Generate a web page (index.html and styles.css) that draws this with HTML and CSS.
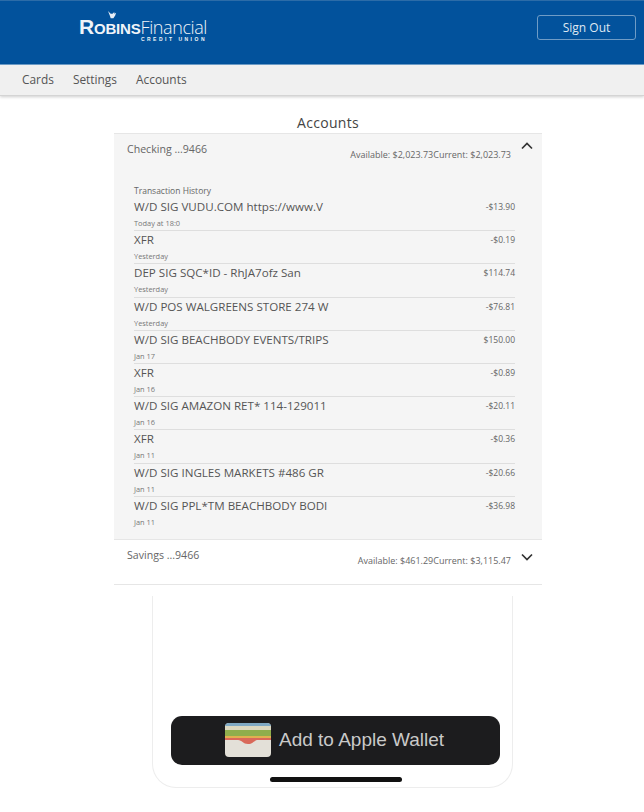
FILE: index.html
```html
<!DOCTYPE html>
<html lang="en">
<head>
    <meta charset="UTF-8">
    <meta name="viewport" content="width=device-width, initial-scale=1.0">
    <title>Accounts</title>
    <link rel="stylesheet" href="styles.css">
</head>
<body>

    <header class="topbar">
        <div class="logo">
            <svg class="logo-bird" viewBox="0 0 12 10" width="11" height="9" aria-hidden="true">
                <path d="M1 0 L4 3 L6 3 L8 1 L8 3 L10 2 L9 5 L7 8 L4 8 L3 5 Z" fill="#e8eef6"/>
            </svg>
            <div class="logo-main"><span class="logo-robins">Robins</span><span class="logo-fin">Financial</span></div>
            <div class="logo-sub">CREDIT UNION</div>
        </div>
        <button class="signout">Sign Out</button>
    </header>

    <nav class="navbar">
        <a>Cards</a>
        <a>Settings</a>
        <a>Accounts</a>
    </nav>

    <main class="content">
        <h1>Accounts</h1>

        <div class="accordion">
            <section class="account open">
                <div class="account-head">
                    <span class="account-name">Checking ...9466</span>
                    <span class="balances">Available: $2,023.73Current: $2,023.73</span>
                    <svg class="chevron" viewBox="0 0 12 8" width="12" height="8"><path d="M1 6.5 L6 1.5 L11 6.5" /></svg>
                </div>

                <div class="history">
                    <div class="history-label">Transaction History</div>
                    <div class="txn"><div class="txn-info"><div class="txn-title">W/D SIG VUDU.COM https://www.V</div><div class="txn-date">Today at 18:0</div></div><div class="txn-amount">-$13.90</div></div>
                    <div class="txn"><div class="txn-info"><div class="txn-title">XFR</div><div class="txn-date">Yesterday</div></div><div class="txn-amount">-$0.19</div></div>
                    <div class="txn"><div class="txn-info"><div class="txn-title">DEP SIG SQC*ID - RhJA7ofz San</div><div class="txn-date">Yesterday</div></div><div class="txn-amount">$114.74</div></div>
                    <div class="txn"><div class="txn-info"><div class="txn-title">W/D POS WALGREENS STORE 274 W</div><div class="txn-date">Yesterday</div></div><div class="txn-amount">-$76.81</div></div>
                    <div class="txn"><div class="txn-info"><div class="txn-title">W/D SIG BEACHBODY EVENTS/TRIPS</div><div class="txn-date">Jan 17</div></div><div class="txn-amount">$150.00</div></div>
                    <div class="txn"><div class="txn-info"><div class="txn-title">XFR</div><div class="txn-date">Jan 16</div></div><div class="txn-amount">-$0.89</div></div>
                    <div class="txn"><div class="txn-info"><div class="txn-title">W/D SIG AMAZON RET* 114-129011</div><div class="txn-date">Jan 16</div></div><div class="txn-amount">-$20.11</div></div>
                    <div class="txn"><div class="txn-info"><div class="txn-title">XFR</div><div class="txn-date">Jan 11</div></div><div class="txn-amount">-$0.36</div></div>
                    <div class="txn"><div class="txn-info"><div class="txn-title">W/D SIG INGLES MARKETS #486 GR</div><div class="txn-date">Jan 11</div></div><div class="txn-amount">-$20.66</div></div>
                    <div class="txn"><div class="txn-info"><div class="txn-title">W/D SIG PPL*TM BEACHBODY BODI</div><div class="txn-date">Jan 11</div></div><div class="txn-amount">-$36.98</div></div>
                </div>
            </section>

            <section class="account">
                <div class="account-head">
                    <span class="account-name">Savings ...9466</span>
                    <span class="balances">Available: $461.29Current: $3,115.47</span>
                    <svg class="chevron chevron-down" viewBox="0 0 12 8" width="12" height="8"><path d="M1 1.5 L6 6.5 L11 1.5" /></svg>
                </div>
            </section>
        </div>

        <div class="phone">
            <div class="wallet-btn">
                <svg class="wallet-icon" viewBox="0 0 46 34" width="46" height="34" aria-hidden="true">
                    <rect width="46" height="34" rx="4" fill="#e3e0d8"/>
                    <path d="M0 4 a4 4 0 0 1 4 -4 h38 a4 4 0 0 1 4 4 v2 h-46 z" fill="#7fa9c4"/>
                    <rect y="3" width="46" height="4" fill="#dcd8c0"/>
                    <rect y="7" width="46" height="6" fill="#8fae4c"/>
                    <rect y="13" width="46" height="4" fill="#e0b050"/>
                    <path d="M0 15 H46 V17 H33 C29 17 28 21 23 21 C18 21 17 17 13 17 H0 Z" fill="#d9695a"/>
                </svg>
                <span class="wallet-text">Add to Apple Wallet</span>
            </div>
            <div class="home-bar"></div>
        </div>
    </main>

</body>
</html>
```

FILE: styles.css
```css
/* Basic Reset */
* {
    margin: 0;
    padding: 0;
    box-sizing: border-box;
}

body {
    background-color: #fff;
    font-family: "Open Sans", Arial, sans-serif;
    color: #555;
}

.topbar {
    height: 65px;
    background: #02529c;
    border-top: 1px solid #2c6ca8;
    border-bottom: 1px solid #6f9fcc;
    display: flex;
    align-items: center;
    justify-content: space-between;
    padding: 0 8px 0 79px;
}

.logo {
    position: relative;
    width: 128px;
    color: #f0f4f9;
    margin-top: -6px;
}

.logo-bird {
    position: absolute;
    left: 28px;
    top: -6px;
}

.logo-main {
    display: flex;
    align-items: baseline;
    line-height: 20px;
}

.logo-robins {
    font-family: "Liberation Sans", Arial, sans-serif;
    font-weight: bold;
    font-variant: small-caps;
    text-transform: lowercase;
    font-size: 21px;
    letter-spacing: -0.2px;
}

.logo-robins::first-letter {
    text-transform: uppercase;
}

.logo-fin {
    font-size: 18px;
    font-weight: 300;
    letter-spacing: -0.4px;
}

.logo-sub {
    font-family: "Liberation Sans", Arial, sans-serif;
    font-size: 5px;
    font-weight: bold;
    letter-spacing: 2.5px;
    line-height: 5px;
    text-align: right;
}

.signout {
    width: 99px;
    height: 25px;
    margin-top: -10px;
    background: transparent;
    color: #dfe8f2;
    border: 1px solid #6f9cc6;
    border-radius: 3px;
    font-family: "Open Sans", Arial, sans-serif;
    font-size: 12px;
}

.navbar {
    height: 31px;
    background: #f0f0f0;
    border-bottom: 1px solid #d4d4d4;
    box-shadow: 0 1px 3px rgba(0, 0, 0, 0.2);
    display: flex;
    align-items: center;
    gap: 19px;
    padding: 0 0 2px 22px;
    font-size: 11.9px;
    color: #555;
}

.content {
    padding-top: 17px;
}

h1 {
    font-size: 14px;
    font-weight: 400;
    line-height: 20px;
    letter-spacing: 0.3px;
    text-align: center;
    color: #444;
    padding-left: 12px;
}

.accordion {
    width: 428px;
    margin-left: 114px;
    border-bottom: 1px solid #e6e6e6;
}

.account {
    border-top: 1px solid #e6e6e6;
}

.account.open {
    background: #f5f5f5;
}

.account-head {
    position: relative;
    height: 44px;
    display: flex;
    justify-content: space-between;
    padding: 8px 31px 0 13px;
}

.account-name {
    font-size: 10.6px;
    line-height: 14px;
    color: #666;
}

.balances {
    font-size: 9px;
    line-height: 12px;
    margin-top: 7px;
    color: #666;
}

.chevron {
    position: absolute;
    right: 9px;
    top: 8px;
    fill: none;
    stroke: #333;
    stroke-width: 1.7;
}

.chevron-down {
    top: 13px;
}

.history {
    padding: 6.5px 27px 9px 20px;
}

.history-label {
    font-size: 8.5px;
    line-height: 11px;
    margin-bottom: 2.5px;
    color: #666;
}

.txn {
    height: 33.2px;
    display: flex;
    justify-content: space-between;
    border-bottom: 1px solid #dedede;
}

.txn:last-child {
    border-bottom: 0;
}

.txn-title {
    font-size: 11.6px;
    line-height: 16px;
    margin-top: 1px;
    color: #555;
}

.txn-date {
    font-size: 7.4px;
    line-height: 10px;
    margin-top: 3px;
    color: #777;
}

.txn-amount {
    font-size: 8.5px;
    line-height: 12px;
    margin-top: 3px;
    color: #666;
}

.phone {
    width: 361px;
    height: 192px;
    margin: 11px 0 0 152px;
    border: 1px solid #ededed;
    border-top: 0;
    border-radius: 0 0 24px 24px;
    display: flex;
    flex-direction: column;
    padding: 120px 0 0 18px;
}

.wallet-btn {
    width: 329px;
    height: 49px;
    background: #1c1c1e;
    border-radius: 11px;
    display: flex;
    align-items: center;
    gap: 8px;
    padding-left: 54px;
}

.wallet-text {
    font-family: "Liberation Sans", Arial, sans-serif;
    font-size: 19px;
    color: #c9c9c9;
}

.home-bar {
    width: 132px;
    height: 5px;
    background: #111;
    border-radius: 3px;
    margin: 12px 0 0 99px;
}
```
